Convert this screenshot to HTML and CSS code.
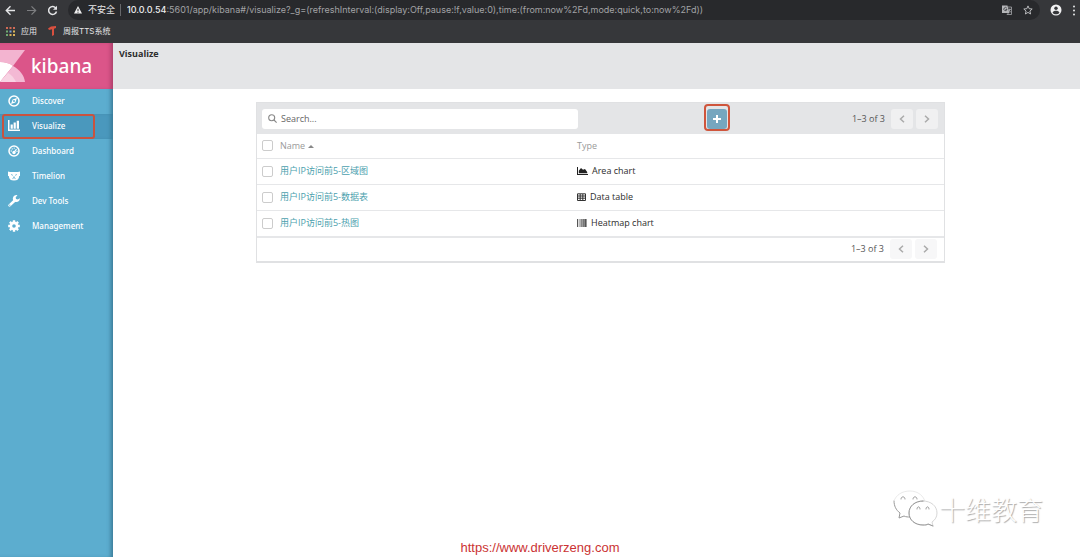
FILE: index.html
```html
<!DOCTYPE html>
<html lang="en">
<head>
<meta charset="utf-8">
<title>Visualize - Kibana</title>
<link rel="stylesheet" href="styles.css">
</head>
<body>
<header class="browser">
  <div class="toolbar">
    <button class="tool" aria-label="Back"><svg width="11" height="11" viewBox="0 0 11 11" fill="none" stroke="#e4e5e7" stroke-width="1.4"><path d="M10 5.5H1.5M5.5 1.3L1.3 5.5l4.2 4.2"/></svg></button>
    <button class="tool" aria-label="Forward"><svg width="11" height="11" viewBox="0 0 11 11" fill="none" stroke="#7d7e81" stroke-width="1.2"><path d="M1 5.5h8.500M5.500 1.300L9.700 5.500l-4.200 4.200"/></svg></button>
    <button class="tool" aria-label="Reload"><svg width="11" height="11" viewBox="0 0 11 11"><path d="M9 3.300A4 4 0 1 0 9.500 6.500" fill="none" stroke="#e4e5e7" stroke-width="1.500"/><path d="M10 .8v4H6z" fill="#e4e5e7"/></svg></button>
    <div class="address">
      <svg width="8" height="8" viewBox="0 0 8 8"><path d="M4 0l4 7.600H0z" fill="#eee"/><path d="M4 2.800v2.200M4 5.700v1" stroke="#28292c"/></svg>
      <span class="insecure">不安全</span>
      <span class="url"><b>10.0.0.54</b>:5601/app/kibana#/visualize?_g=(refreshInterval:(display:Off,pause:!f,value:0),time:(from:now%2Fd,mode:quick,to:now%2Fd))</span>
      <button class="tool" aria-label="Translate"><svg width="10" height="10" viewBox="0 0 10 10"><path d="M0 .5h5.500L7.500 8H0z" fill="#b5b6b9"/><path d="M6 2h3.500v7.500H5L6.500 8M6.500 4.500h2.500M7.800 3.500c0 2-.5 3-1.200 3.500M7 5l2 2.500" fill="none" stroke="#a5a6a9" stroke-width=".8"/><path d="M4.800 3.200A1.600 1.600 0 1 0 5 4.500H3.500" fill="none" stroke="#35363a" stroke-width=".8"/></svg></button>
      <button class="tool star" aria-label="Bookmark"><svg width="10" height="10" viewBox="0 0 10 10"><path d="M5 .9l1.200 2.800 3 .3-2.300 2 .7 3L5 7.400 2.400 9l.7-3L.8 4l3-.3z" fill="none" stroke="#c6c7c9" stroke-width=".9"/></svg></button>
    </div>
    <button class="tool" aria-label="Profile"><svg width="12" height="12" viewBox="0 0 12 12"><circle cx="6" cy="6" r="5.500" fill="#f1f1f2"/><circle cx="6" cy="4.300" r="1.700" fill="#36373a"/><path d="M2.600 8.700c.6-2.600 6.200-2.600 6.800 0-1.500 2-5.300 2-6.800 0z" fill="#36373a"/></svg></button>
    <button class="tool" aria-label="Menu"><svg width="4" height="11" viewBox="0 0 4 11" fill="#e4e5e7"><circle cx="2" cy="1.500" r="1"/><circle cx="2" cy="5.500" r="1"/><circle cx="2" cy="9.500" r="1"/></svg></button>
  </div>
  <nav class="bookmarks">
    <a href="#"><svg width="9" height="9" viewBox="0 0 9 9"><g fill="#cf6a55"><path d="M0 0h2v2H0zM3.500 0h2v2h-2zM7 0h2v2H7z"/></g><path d="M0 3.500h2v2H0zM0 7h2v2H0z" fill="#6faa71"/><path d="M3.500 3.500h2v2h-2z" fill="#7aa2d8"/><path d="M7 3.500h2v2H7zM3.500 7h2v2h-2zM7 7h2v2H7z" fill="#d8b45a"/></svg>应用</a>
    <a href="#"><svg width="9" height="10" viewBox="0 0 9 10"><path d="M0 2.500L3 .5 8 0v2L6 2.800V9L4 10V3.200L1 4z" fill="#d8503f"/></svg>周报TTS系统</a>
  </nav>
</header>
<div class="app">
  <aside class="sidebar">
    <a class="brand" href="#"><svg width="25" height="32" viewBox="0 0 25 32"><path d="M0 0h25L13 16C9 13 5 12 0 12z" fill="#f3b4d0"/><path d="M0 12c5 0 9 1 13 4L0 32z" fill="#fff"/><path d="M0 32L13 16c7 4 11 9 12 16z" fill="#f3b9d4"/><path d="M0 32l8-9c4 2 6 5 8 9z" fill="#f8d3e3"/></svg><span>kibana</span></a>
    <nav class="menu">
      <a href="#"><svg width="12" height="12" viewBox="0 0 12 12"><circle cx="6" cy="6" r="5" fill="none" stroke="#fff" stroke-width="1.500"/><path d="M9 3L7.400 7.400 3 9l1.600-4.400z" fill="#fff"/><circle cx="6" cy="6" r="1" fill="#5cadcf"/></svg>Discover</a>
      <a href="#" class="active"><svg width="12" height="12" viewBox="0 0 12 12" fill="#fff"><path d="M0 0h1.500v9.600H12V11H0zM2.600 4.500h2.200v4.300H2.600zM5.600 2.500h2.200v6.300H5.600zM8.700.8h2.300v8H8.700z"/></svg>Visualize</a>
      <a href="#"><svg width="12" height="12" viewBox="0 0 12 12"><circle cx="6" cy="6" r="5" fill="none" stroke="#fff" stroke-width="1.500"/><circle cx="6" cy="7.500" r="1.700" fill="#fff"/><path d="M6 7.500L8.500 4" stroke="#fff" stroke-width="1.200"/><g fill="#fff"><circle cx="3.200" cy="6" r=".7"/><circle cx="4.200" cy="3.900" r=".7"/><circle cx="6.200" cy="3.100" r=".7"/><circle cx="9" cy="6.200" r=".7"/></g></svg>Dashboard</a>
      <a href="#"><svg width="12" height="12" viewBox="0 0 12 12"><path d="M0 1.500l2 .5h8l2-.5v4.500h-.8C11 9 9.500 10.500 6 10.500S1 9 .8 6H0z" fill="#fff"/><path d="M3.200 4.500l1.600.8M8.800 4.500l-1.600.8M6 6.300v1.500M4.500 8.600L6 7.600l1.500 1" fill="none" stroke="#5cadcf" stroke-width=".9"/></svg>Timelion</a>
      <a href="#"><svg width="12" height="12" viewBox="0 0 12 12"><path d="M1.600 10.400L7 5.200" stroke="#fff" stroke-width="2.600" stroke-linecap="round"/><path d="M11.800 3.200A3.500 3.500 0 1 1 9.500.3L7.700 2.200l.3 1.900 1.900.4z" fill="#fff"/><circle cx="1.800" cy="10.200" r=".6" fill="#5cadcf"/></svg>Dev Tools</a>
      <a href="#"><svg width="12" height="12" viewBox="0 0 12 12"><circle cx="6" cy="6" r="3.100" fill="none" stroke="#fff" stroke-width="2.600"/><path d="M6 .2v2M6 9.800v2M.2 6h2M9.800 6h2M1.900 1.900l1.400 1.400M8.700 8.700l1.400 1.400M1.900 10.100l1.400-1.400M8.700 3.300l1.400-1.400" stroke="#fff" stroke-width="2.400"/></svg>Management</a>
    </nav>
  </aside>
  <main class="main">
    <h1 class="title">Visualize</h1>
    <section class="panel">
      <div class="bar">
        <label class="search"><svg width="9" height="9" viewBox="0 0 9 9" fill="none" stroke="#888" stroke-width="1.100"><circle cx="3.700" cy="3.700" r="3"/><path d="M6 6l2.600 2.600"/></svg><input type="text" placeholder="Search..." aria-label="Search"></label>
        <button class="add" aria-label="Create new visualization"><svg width="8" height="8" viewBox="0 0 8 8"><path d="M4 0v8M0 4h8" stroke="#fff" stroke-width="2"/></svg></button>
        <div class="pager"><span>1–3 of 3</span>
          <button aria-label="Previous page"><svg width="6" height="8" viewBox="0 0 6 8"><path d="M5 .7L1.500 4 5 7.300"/></svg></button>
          <button aria-label="Next page"><svg width="6" height="8" viewBox="0 0 6 8"><path d="M1 .7L4.500 4 1 7.300"/></svg></button></div>
      </div>
      <table class="list">
        <thead><tr><th class="check"><input type="checkbox" aria-label="Select all"></th><th class="name">Name <svg width="6" height="3" viewBox="0 0 6 3"><path d="M3 0l3 3H0z" fill="#888"/></svg></th><th>Type</th></tr></thead>
        <tbody>
          <tr><td class="check"><input type="checkbox" aria-label="Select 用户IP访问前5-区域图"></td><td><a href="#">用户IP访问前5-区域图</a></td><td><svg width="11" height="8" viewBox="0 0 11 8" fill="#222"><path d="M0 0h1v7h10v1H0zM1.800 6.300V3.800L4 1l2 1.800L8 2l2.200 3v1.300z"/></svg>Area chart</td></tr>
          <tr><td class="check"><input type="checkbox" aria-label="Select 用户IP访问前5-数据表"></td><td><a href="#">用户IP访问前5-数据表</a></td><td><svg width="9" height="8" viewBox="0 0 9 8" fill="none" stroke="#333"><path d="M.5.800h8v6.700h-8zM.5 3h8M.5 5.200h8M3.200 1v6.500M5.800 1v6.500"/></svg>Data table</td></tr>
          <tr><td class="check"><input type="checkbox" aria-label="Select 用户IP访问前5-热图"></td><td><a href="#">用户IP访问前5-热图</a></td><td><svg width="10" height="8" viewBox="0 0 10 8"><path d="M0 0h1v8H0z" fill="#555"/><path d="M1.500 0h2v8h-2z" fill="#bbb"/><path d="M3.500 0h2v8h-2z" fill="#888"/><path d="M5.500 0h2v8h-2z" fill="#777"/><path d="M7.500 0H9v8H7.500z" fill="#555"/><path d="M9 0h1v8H9z" fill="#999"/></svg>Heatmap chart</td></tr>
        </tbody>
      </table>
      <div class="foot">
        <div class="pager"><span>1–3 of 3</span>
          <button aria-label="Previous page"><svg width="6" height="8" viewBox="0 0 6 8"><path d="M5 .7L1.500 4 5 7.300"/></svg></button>
          <button aria-label="Next page"><svg width="6" height="8" viewBox="0 0 6 8"><path d="M1 .7L4.500 4 1 7.300"/></svg></button></div>
      </div>
    </section>
  </main>
</div>
<a class="site" href="https://www.driverzeng.com">https://www.driverzeng.com</a>
<div class="watermark"><svg width="46" height="38" viewBox="0 0 46 38"><g fill="#fff" stroke-linecap="round"><path d="M17 27c-2 0-4 0-6-1l-5 2 1-5C-1 17 1 7 9 3c10-5 23 1 23 10" stroke="none"/><path d="M1 11c0 5 2 9 6 12l-1 5 5-2c2 1 4 1 6 1" stroke="#999" fill="none"/><path d="M1 11C3 5 9 1 17 1c8 0 14 5 15 11" stroke="#e4e4e4" fill="none" stroke-width=".8"/><path d="M30 11c-8 0-14 5-14 12s6 12 14 12c2 0 4 0 5-1l5 2-1-4c3-2 5-5 5-9 0-7-6-12-14-12z" stroke="#ccc" stroke-width=".8"/><path d="M30 11c-8 0-14 5-14 12s6 12 14 12c2 0 4 0 5-1l5 2" stroke="#999" fill="none"/><path d="M8 9c0-3 4-3 4 0M20 9c0-3 4-3 4 0M24 19c0-3 3-3 3 0M33 19c0-3 3-3 3 0" fill="none" stroke="#999"/></g></svg><span>十维教育</span></div>
</body>
</html>
```
FILE: styles.css
```css
* { box-sizing: border-box; }
body {
  margin: 0;
  min-height: 100vh;
  display: flex;
  flex-direction: column;
  position: relative;
  background: #fff;
  color: #2d2d2d;
  font: 9px/16px "Open Sans", "Noto Sans CJK SC", sans-serif;
}
a { color: inherit; text-decoration: none; }
button { border: 0; padding: 0; background: none; display: flex; align-items: center; justify-content: center; }
svg { flex: none; }

.browser { background: #36373a; color: #e6e6e7; font-family: Inter, "Noto Sans CJK SC", sans-serif; height: 43px; }
.toolbar { display: flex; align-items: center; gap: 10px; height: 20px; padding: 0 4px 0 5px; }
.address { flex: 1; display: flex; align-items: center; height: 20px; padding: 0 7px 0 6px; border-radius: 10px; background: #28292c; min-width: 0; }
.insecure { margin-left: 6px; padding-right: 5px; border-right: 1px solid #66676a; line-height: 12px; }
.url { flex: 1; margin-left: 6px; color: #a2a3a6; white-space: nowrap; overflow: hidden; }
.url b { font-weight: 500; color: #eeeeef; }
.star { margin-left: 11px; }
.bookmarks { display: flex; align-items: center; gap: 11px; height: 22px; padding-left: 6px; font-size: 8px; }
.bookmarks a { display: flex; align-items: center; gap: 6px; }

.app { flex: 1; display: flex; }
.sidebar { width: 113px; background: #5cadcf; color: #fff; box-shadow: inset -4px 0 4px -2px #397995; }
.brand { display: flex; align-items: center; gap: 6px; height: 46px; background: #db5589; box-shadow: inset -4px 0 4px -2px #a83e69; font: 500 19px/28px "Noto Sans", sans-serif; }
.menu a { display: flex; align-items: center; gap: 12px; height: 25px; padding: 0 0 2px 8px; font: 500 8px/16px "Noto Sans", sans-serif; }
.menu .active { position: relative; background: #4a98bd; box-shadow: inset -4px 0 4px -2px #397995; }
.menu .active::after { content: ""; position: absolute; inset: 0 18px 0 2px; border: 2px solid #c9533f; border-radius: 3px; }

.main { flex: 1; min-width: 0; }
.title { margin: 0; height: 46px; padding: 3px 6px; background: #e4e5e7; font-size: 9px; line-height: 16px; font-weight: 700; }
.panel { margin: 13px 135px 0 143px; border: 1px solid #e0e1e3; border-bottom-width: 2px; }
.bar { display: flex; align-items: center; justify-content: space-between; height: 31px; padding: 0 6px 0 5px; background: #e4e5e7; }
.search { display: flex; align-items: center; gap: 4px; width: 316px; height: 20px; padding: 0 6px; border-radius: 3px; background: #fff; }
.search input { flex: 1; min-width: 0; border: 0; padding: 0; background: none; font: inherit; outline: 0; }
.search input::placeholder { color: #666; opacity: 1; }
.add { position: relative; width: 20px; height: 20px; margin-left: 4px; border-radius: 3px; background: #76a6bf; }
.add::after { content: ""; position: absolute; inset: -5px -3px -2px; border: 2px solid #cf553c; border-radius: 4px; }
.pager { display: flex; align-items: center; gap: 3px; color: #555; }
.pager span { margin-right: 3px; }
.pager button { width: 22px; height: 20px; border-radius: 3px; background: #f0f0f1; }
.pager path { fill: none; stroke: #aaa; stroke-width: 1.5; }
.list { width: 100%; border-collapse: collapse; table-layout: fixed; }
.list td { height: 26px; }
.list th, .list td { padding: 0; text-align: left; border-bottom: 1px solid #e6e7e9; white-space: nowrap; }
.list th { height: 24px; font-weight: 400; color: #9a9a9a; }
.list .check { width: 23px; padding-left: 5px; }
.list .name { width: 297px; }
.list .name svg { vertical-align: 1px; }
.list td svg { margin-right: 4px; vertical-align: -1px; }
.list td a { color: #4c9fae; }
.list input { appearance: none; display: block; margin: 0; width: 11px; height: 11px; border: 1px solid #ccc; border-radius: 2px; background: #fff; }
.foot { display: flex; align-items: center; justify-content: flex-end; height: 24px; padding-right: 7px; border-top: 1px solid #e6e7e9; }
.foot .pager button { background: #f7f7f8; }

.site { position: absolute; left: 0; right: 0; bottom: 0; text-align: center; color: #cb3333; font: 13px/18px "Liberation Sans", sans-serif; pointer-events: none; }
.watermark { position: absolute; right: 37px; bottom: 29px; display: flex; align-items: center; color: #fff; font: 300 26px/38px "Noto Sans CJK SC", sans-serif; text-shadow: 1px 1px 1px #aaa; }
```
